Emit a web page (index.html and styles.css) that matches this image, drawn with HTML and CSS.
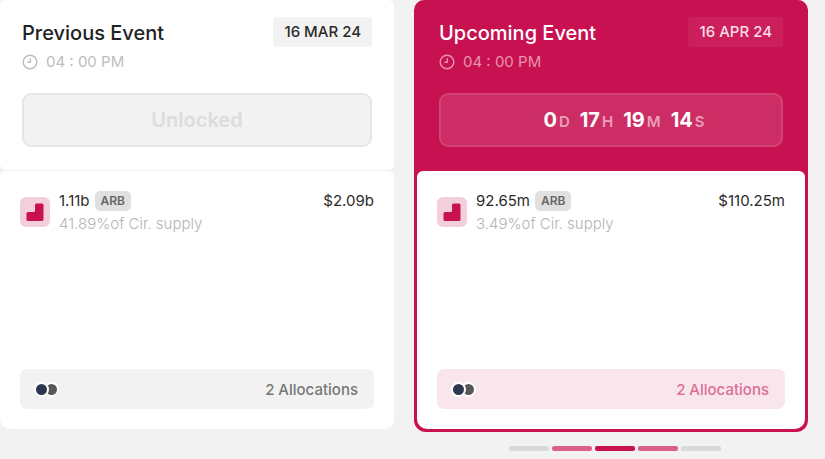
FILE: index.html
```
<!DOCTYPE html>
<html lang="en">
<head>
    <meta charset="UTF-8">
    <meta name="viewport" content="width=device-width, initial-scale=1.0">
    <title>Unlock Events</title>
    <link rel="stylesheet" href="styles.css">
</head>
<body>
    <main class="events">
        <section class="card">
            <div class="card-header">
                <div class="title-row">
                    <div>
                        <h2>Previous Event</h2>
                        <p class="time">
                            <svg class="clock" viewBox="0 0 16 16" fill="none" stroke="currentColor" stroke-width="1.4" stroke-linecap="round" stroke-linejoin="round">
                                <circle cx="8" cy="8" r="6.8"/>
                                <path d="M8.4 4.6V8.200H5.800"/>
                            </svg>
                            04 : 00 PM
                        </p>
                    </div>
                    <span class="date">16 MAR 24</span>
                </div>
                <button type="button" class="status" disabled>Unlocked</button>
            </div>
            <div class="card-body">
                <div class="token">
                    <svg class="token-icon" viewBox="0 0 30 30">
                        <rect width="30" height="30" rx="6" fill="#f3cfdb"/>
                        <path d="M16.500 6.500h5.500a1.500 1.500 0 0 1 1.500 1.500v14.500a1.500 1.500 0 0 1-1.500 1.500H8a1.500 1.500 0 0 1-1.500-1.500v-6A1.500 1.500 0 0 1 8 15h5.500a1.500 1.500 0 0 0 1.500-1.500V8a1.500 1.500 0 0 1 1.500-1.500z" fill="#c71150"/>
                    </svg>
                    <div class="token-info">
                        <p class="amount">1.11b <span class="symbol">ARB</span></p>
                        <p class="supply">41.89%of Cir. supply</p>
                    </div>
                    <span class="price">$2.09b</span>
                </div>
                <button type="button" class="allocations">
                    <span class="dots"><span class="dot dot-navy"></span><span class="dot dot-gray"></span></span>
                    2 Allocations
                </button>
            </div>
        </section>

        <section class="card upcoming">
            <div class="card-header">
                <div class="title-row">
                    <div>
                        <h2>Upcoming Event</h2>
                        <p class="time">
                            <svg class="clock" viewBox="0 0 16 16" fill="none" stroke="currentColor" stroke-width="1.4" stroke-linecap="round" stroke-linejoin="round">
                                <circle cx="8" cy="8" r="6.8"/>
                                <path d="M8.4 4.6V8.200H5.800"/>
                            </svg>
                            04 : 00 PM
                        </p>
                    </div>
                    <span class="date">16 APR 24</span>
                </div>
                <div class="status countdown">
                    <span>0<small>D</small></span>
                    <span>17<small>H</small></span>
                    <span>19<small>M</small></span>
                    <span>14<small>S</small></span>
                </div>
            </div>
            <div class="card-body">
                <div class="token">
                    <svg class="token-icon" viewBox="0 0 30 30">
                        <rect width="30" height="30" rx="6" fill="#f3cfdb"/>
                        <path d="M16.500 6.500h5.500a1.500 1.500 0 0 1 1.500 1.500v14.500a1.500 1.500 0 0 1-1.500 1.500H8a1.500 1.500 0 0 1-1.500-1.500v-6A1.500 1.500 0 0 1 8 15h5.500a1.500 1.500 0 0 0 1.500-1.500V8a1.500 1.500 0 0 1 1.500-1.500z" fill="#c71150"/>
                    </svg>
                    <div class="token-info">
                        <p class="amount">92.65m <span class="symbol">ARB</span></p>
                        <p class="supply">3.49%of Cir. supply</p>
                    </div>
                    <span class="price">$110.25m</span>
                </div>
                <button type="button" class="allocations">
                    <span class="dots"><span class="dot dot-navy"></span><span class="dot dot-gray"></span></span>
                    2 Allocations
                </button>
            </div>
        </section>
    </main>

    <nav class="pager" aria-label="Events">
        <button type="button" aria-label="Event 1"></button>
        <button type="button" class="near" aria-label="Event 2"></button>
        <button type="button" class="active" aria-label="Event 3"></button>
        <button type="button" class="near" aria-label="Event 4"></button>
        <button type="button" aria-label="Event 5"></button>
    </nav>
</body>
</html>
```
FILE: styles.css
```
* {
    box-sizing: border-box;
}

body {
    margin: 0;
    background: #f2f2f2;
    font-family: Inter, "Liberation Sans", sans-serif;
    font-size: 15px;
    color: #2b2b2b;
}

h2, p {
    margin: 0;
}

button {
    font-family: inherit;
    border: none;
    cursor: pointer;
}

.events {
    display: grid;
    grid-template-columns: 1fr 1fr;
    gap: 20px;
    align-items: start;
    padding-right: 17px;
}

.card {
    display: flex;
    flex-direction: column;
}

.card-header {
    padding: 17px 22px 23px;
    background: #fff;
    border-radius: 6px;
}

.title-row {
    display: flex;
    justify-content: space-between;
    align-items: flex-start;
    margin-bottom: 18px;
}

h2 {
    font-size: 20px;
    font-weight: 500;
    line-height: 32px;
    color: #222;
}

.time {
    display: flex;
    align-items: center;
    gap: 8px;
    line-height: 26px;
    color: #bdbdbd;
}

.clock {
    width: 16px;
    height: 16px;
}

.date {
    padding: 0 11px;
    border-radius: 4px;
    background: #f2f2f2;
    font-weight: 500;
    line-height: 30px;
}

.status {
    display: flex;
    justify-content: center;
    align-items: center;
    width: 100%;
    height: 54px;
    border: 2px solid #e6e6e6;
    border-radius: 9px;
    background: #f2f2f2;
    font-size: 20px;
    font-weight: 600;
    color: #dcdcde;
}

.card-body {
    display: flex;
    flex-direction: column;
    justify-content: space-between;
    min-height: 258px;
    margin-top: 1px;
    padding: 18px 20px 20px;
    background: #fff;
    border-radius: 6px 6px 10px 10px;
}

.token {
    display: flex;
    align-items: flex-start;
    gap: 9px;
}

.token-icon {
    width: 30px;
    height: 30px;
    margin-top: 8px;
}

.token-info {
    flex: 1;
}

.amount {
    display: flex;
    align-items: center;
    gap: 5px;
    line-height: 24px;
}

.symbol {
    padding: 0 6px;
    border-radius: 5px;
    background: #e0e0e0;
    font-size: 12px;
    font-weight: 600;
    line-height: 20px;
    color: #666;
}

.supply {
    font-weight: 300;
    line-height: 22px;
    color: #b4b4b4;
}

.price {
    line-height: 24px;
}

.allocations {
    display: flex;
    justify-content: space-between;
    align-items: center;
    width: 100%;
    height: 40px;
    padding: 0 16px 0 14px;
    border-radius: 7px;
    background: #f2f2f2;
    font-size: 15px;
    font-weight: 500;
    color: #777;
}

.dots {
    display: flex;
}

.dot {
    width: 15px;
    height: 15px;
    border: 2px solid #fff;
    border-radius: 50%;
}

.dot-navy {
    position: relative;
    z-index: 1;
    background: #2e3750;
}

.dot-gray {
    margin-left: -5px;
    background: #585858;
}

/* Upcoming event */
.upcoming {
    border: 3px solid #c71150;
    border-top: none;
    border-radius: 10px 10px 12px 12px;
    background: #c71150;
}

.upcoming .card-header {
    background: none;
    color: #fff;
}

.upcoming h2 {
    color: #fff;
}

.upcoming .time {
    color: #e894b1;
}

.upcoming .date {
    background: #cb1f5b;
    color: #f9dde7;
}

.upcoming .countdown {
    gap: 10px;
    padding-left: 26px;
    border-color: #d24475;
    background: #cc2d64;
    font-weight: 700;
    color: #fff;
}

.countdown small {
    margin-left: 2px;
    font-size: 15px;
    font-weight: 600;
    color: #ea9fba;
}

.upcoming .allocations {
    background: #f9e6ec;
    color: #dd6e95;
}

/* Slider pager */
.pager {
    display: flex;
    justify-content: flex-end;
    gap: 3px;
    margin-top: 14px;
    padding-right: 104px;
}

.pager button {
    width: 40px;
    height: 5px;
    padding: 0;
    border-radius: 2px;
    background: #d9d9d9;
}

.pager .near {
    background: #da608b;
}

.pager .active {
    background: #c71150;
}
```
